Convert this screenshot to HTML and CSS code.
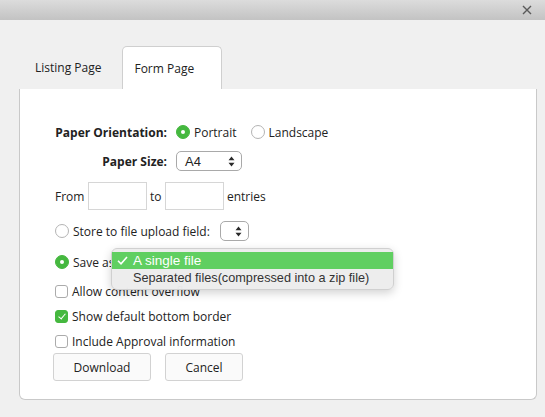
FILE: index.html
```html
<!DOCTYPE html>
<html lang="en">
<head>
    <meta charset="UTF-8">
    <meta name="viewport" content="width=device-width, initial-scale=1.0">
    <title>Generate PDF</title>
    <link rel="stylesheet" href="styles.css">
</head>
<body>
    <div class="titlebar">
        <button class="close-btn" type="button" aria-label="Close">
            <svg width="10" height="10" viewBox="0 0 10 10"><path d="M1 1L9 9M9 1L1 9" stroke="#5a5a5a" stroke-width="1.4" fill="none"/></svg>
        </button>
    </div>

    <div class="dialog">
        <div class="tabs">
            <div class="tab">Listing Page</div>
            <div class="tab active">Form Page</div>
        </div>

        <div class="panel">
            <div class="row">
                <label class="field-label">Paper Orientation:</label>
                <span class="radio checked"></span><span class="opt-text">Portrait</span>
                <span class="radio spaced"></span><span class="opt-text">Landscape</span>
            </div>
            <div class="row row-size">
                <label class="field-label">Paper Size:</label>
                <span class="select select-size">A4
                    <svg class="arrows" width="7" height="11" viewBox="0 0 7 11"><path d="M3.5 0.5L6.5 4.2H0.5Z M3.5 10.5L6.5 6.8H0.5Z" fill="#2a2a2a"/></svg>
                </span>
            </div>
            <div class="row row-range">
                <span>From</span>
                <span class="text-input"></span>
                <span>to</span>
                <span class="text-input"></span>
                <span>entries</span>
            </div>
            <div class="row row-store">
                <span class="radio"></span><span class="opt-text">Store to file upload field:</span>
                <span class="select select-field">
                    <svg class="arrows" width="7" height="11" viewBox="0 0 7 11"><path d="M3.5 0.5L6.5 4.2H0.5Z M3.5 10.5L6.5 6.8H0.5Z" fill="#2a2a2a"/></svg>
                </span>
            </div>
            <div class="row row-save">
                <span class="radio checked"></span><span class="opt-text">Save as</span>
            </div>
            <div class="checks">
                <div class="check-row"><span class="checkbox"></span><span class="opt-text">Allow content overflow</span></div>
                <div class="check-row"><span class="checkbox checked"></span><span class="opt-text">Show default bottom border</span></div>
                <div class="check-row"><span class="checkbox"></span><span class="opt-text">Include Approval information</span></div>
            </div>
            <div class="buttons">
                <button class="btn btn-download" type="button">Download</button>
                <button class="btn btn-cancel" type="button">Cancel</button>
            </div>

            <div class="menu">
                <div class="menu-item selected">
                    <svg class="tick" width="11" height="9" viewBox="0 0 11 9"><path d="M1 4.8L4 7.8L10 1" stroke="#fff" stroke-width="1.6" fill="none"/></svg>
                    A single file
                </div>
                <div class="menu-item"><span class="tick"></span>Separated files(compressed into a zip file)</div>
            </div>
        </div>
    </div>
</body>
</html>
```

FILE: styles.css
```css
body {
    margin: 0;
    background-color: #f0f0f0;
    font-family: "Open Sans", "Noto Sans", sans-serif;
    font-size: 12px;
    color: #222;
}
.titlebar {
    height: 20px;
    background: linear-gradient(#dcdcdc, #c3c3c3);
    display: flex;
    justify-content: flex-end;
    align-items: center;
}
.close-btn {
    border: none;
    background: none;
    padding: 0;
    margin-right: 12px;
    width: 12px;
    height: 12px;
    display: flex;
    align-items: center;
    justify-content: center;
}
.dialog {
    padding: 26px 8px 0 19px;
}
.tabs {
    display: flex;
    gap: 5px;
    font-size: 12px;
}
.tab {
    height: 43px;
    padding: 0 16px;
    display: flex;
    align-items: center;
    box-sizing: border-box;
    color: #222;
}
.tab.active {
    background-color: #fff;
    border: 1px solid #cfcfcf;
    border-bottom: none;
    border-radius: 5px 5px 0 0;
    padding: 0 27px 0 11px;
    margin-bottom: -1px;
    position: relative;
    z-index: 1;
}
.panel {
    position: relative;
    height: 311px;
    box-sizing: border-box;
    background-color: #fff;
    border: 1px solid #c9c9c9;
    border-top: none;
    border-radius: 0 0 6px 6px;
    padding: 33px 0 0 35px;
}
.row {
    display: flex;
    align-items: center;
    height: 20px;
}
.field-label {
    width: 112px;
    text-align: right;
    font-weight: bold;
    margin-right: 9px;
}
.radio {
    width: 12px;
    height: 12px;
    border: 1px solid #b4b4b4;
    border-radius: 50%;
    background-color: #fff;
    box-sizing: content-box;
    flex-shrink: 0;
    position: relative;
}
.radio.checked {
    background-color: #45b83f;
    border-color: #45b83f;
}
.radio.checked::after {
    content: "";
    position: absolute;
    left: 4px;
    top: 4px;
    width: 4px;
    height: 4px;
    border-radius: 50%;
    background-color: #fff;
}
.radio.spaced {
    margin-left: 14px;
}
.opt-text {
    margin-left: 4px;
}
.row-size {
    margin-top: 9px;
}
.select {
    height: 20px;
    box-sizing: border-box;
    border: 1px solid #a9a9a9;
    border-radius: 5px;
    background-color: #fff;
    display: flex;
    align-items: center;
    font-family: "Liberation Sans", Arial, sans-serif;
    font-size: 13px;
    color: #222;
    position: relative;
}
.select-size {
    width: 66px;
    padding-left: 8px;
}
.select-field {
    width: 29px;
    margin-left: 10px;
}
.arrows {
    position: absolute;
    right: 6px;
    top: 4px;
}
.row-range {
    height: 28px;
    margin-top: 11px;
}
.text-input {
    width: 59px;
    height: 28px;
    box-sizing: border-box;
    border: 1px solid #d6d6d6;
    margin: 0 3px 0 3.5px;
}
.row-store {
    margin-top: 11px;
}
.row-save {
    margin-top: 11px;
}
.checks {
    margin-top: 7px;
}
.check-row {
    display: flex;
    align-items: center;
    height: 25px;
}
.checkbox {
    width: 11px;
    height: 11px;
    border: 1px solid #ababab;
    border-radius: 3px;
    background-color: #fff;
    flex-shrink: 0;
    position: relative;
}
.checkbox.checked {
    background-color: #45b83f;
    border-color: #45b83f;
}
.checkbox.checked::after {
    content: "";
    position: absolute;
    left: 4px;
    top: 1px;
    width: 3px;
    height: 6px;
    border: solid #fff;
    border-width: 0 1.5px 1.5px 0;
    transform: rotate(40deg);
}
.buttons {
    display: flex;
    gap: 14px;
    margin-left: -2px;
    margin-top: -1px;
}
.btn {
    height: 28px;
    border: 1px solid #d2d2d2;
    border-radius: 3px;
    background-color: #fafafa;
    font-family: "Open Sans", "Noto Sans", sans-serif;
    font-size: 12px;
    color: #222;
}
.btn-download {
    width: 98px;
}
.btn-cancel {
    width: 78px;
}
.menu {
    position: absolute;
    left: 91px;
    top: 159px;
    width: 281px;
    padding: 3px 0;
    background-color: rgba(236, 236, 236, 0.97);
    border: 1px solid #d0d0d0;
    border-radius: 6px;
    box-shadow: 0 3px 10px rgba(0, 0, 0, 0.18);
    font-family: "Liberation Sans", Arial, sans-serif;
    font-size: 12.7px;
    color: #333;
}
.menu-item {
    height: 17px;
    display: flex;
    align-items: center;
    padding-left: 5px;
}
.menu-item.selected {
    background-color: #60cf61;
    color: #fff;
    font-size: 13.5px;
}
.tick {
    width: 11px;
    margin-right: 5px;
    display: inline-block;
}
```
